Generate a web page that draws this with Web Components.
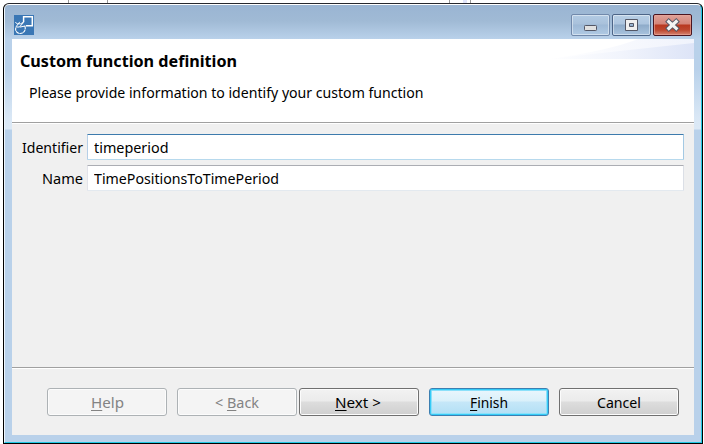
<!DOCTYPE html>
<html lang="en">
<head>
<meta charset="utf-8">
<title>Custom function definition</title>
<style>
html, body { margin: 0; width: 704px; height: 444px; overflow: hidden; background: #fff; font-family: "Noto Sans", "Open Sans", sans-serif; }
</style>
</head>
<body>
<dialog-window>
  <caption-bar slot="caption"></caption-bar>
  <wizard-header slot="body">
    <fit-text slot="title" w="217" size="15.6" bold>Custom function definition</fit-text>
    <fit-text slot="message" w="394.5">Please provide information to identify your custom function</fit-text>
  </wizard-header>
  <wizard-form slot="body">
    <form-field focused><fit-text slot="label" w="61">Identifier</fit-text><fit-text w="74.5">timeperiod</fit-text></form-field>
    <form-field><fit-text slot="label" w="41">Name</fit-text><fit-text w="185">TimePositionsToTimePeriod</fit-text></form-field>
  </wizard-form>
  <wizard-footer slot="body">
    <push-button disabled><fit-text w="33"><u>H</u>elp</fit-text></push-button>
    <push-button disabled><fit-text w="44">&lt; <u>B</u>ack</fit-text></push-button>
    <push-button joined><fit-text w="46"><u>N</u>ext &gt;</fit-text></push-button>
    <push-button primary><fit-text w="38"><u>F</u>inish</fit-text></push-button>
    <push-button><fit-text w="44">Cancel</fit-text></push-button>
  </wizard-footer>
</dialog-window>

<script>
function define(name, html, ready) {
  const template = document.createElement('template');
  template.innerHTML = html;
  customElements.define(name, class extends HTMLElement {
    connectedCallback() {
      if (this.shadowRoot) return;
      this.attachShadow({ mode: 'open' }).append(template.content.cloneNode(true));
      if (ready) ready(this);
    }
  });
}

define('dialog-window', `
<style>
:host { display: block; position: relative; box-sizing: border-box; width: 704px; height: 444px; padding: 3px 1px 0 3px;
  background:
    linear-gradient(#999,#999) 68px 0/1px 3px no-repeat,
    linear-gradient(#999,#999) 107px 0/1px 3px no-repeat,
    linear-gradient(#999,#999) 449px 0/1px 3px no-repeat,
    linear-gradient(#dfe4fa,#dfe4fa) 463px 0/4px 3px no-repeat,
    linear-gradient(#999,#999) 470px 0/1px 3px no-repeat, #fff; }
.frame { box-sizing: border-box; height: 441px; border: 1px solid #000; border-top-color: #26282e; border-radius: 6px 6px 0 0; background: #000; }
.glass { box-sizing: border-box; height: 439px; border: 1px solid; border-color: #fff #21c8e4 #21c8e4 #eef6fd; border-radius: 5px 5px 0 0;
  padding: 0 7px 7px; display: flex; flex-direction: column;
  background: linear-gradient(#9ab5d3 0, #a0bad5 16px, #b9d1ea 34px, #b9d1ea 64px, #d9e7f5 112px, #dce9f6 124px, #b9d1ea 125px); }
.client { flex: 1; display: flex; flex-direction: column; background: #f0f0f0; min-height: 0; }
</style>
<div class="frame"><div class="glass"><slot name="caption"></slot><div class="client"><slot name="body"></slot></div></div></div>`);

define('caption-bar', `
<style>
:host { display: flex; height: 34px; flex: none; justify-content: space-between; align-items: flex-start; box-sizing: border-box; padding: 9px 2px 0 2px; }
.app { margin-top: 1px; display: block; }
.buttons { display: flex; gap: 2px; }
.b { box-sizing: border-box; width: 39px; height: 22px; border: 1px solid #4d6587; border-radius: 2px; box-shadow: inset 0 0 0 1px #ffffff70;
  background: linear-gradient(#b8cfe5 0, #adc5df 9px, #8eabc9 10px, #a9c3de 100%); }
.b.min { border-color: #7189ab; background: linear-gradient(#b2cbe4 0, #a9c1db 9px, #9eb9d6 10px, #b0cae4 100%); }
.b.close { border-color: #4a1520; box-shadow: inset 0 0 0 1px #e9a699a0; background: linear-gradient(#dfa198 0, #d48478 9px, #b83820 10px, #bd472f 15px, #d58572 100%); }
.b svg { display: block; }
</style>
<svg class="app" width="20" height="20" viewBox="0 0 20 20" fill="none" stroke="#fff">
  <rect width="20" height="20" fill="#3a77b5" stroke="none"/>
  <path d="M9.600 7V1.700h8.700v9.100H12" stroke-width="1.500"/>
  <path d="M10.700 10.700c1.700 3.700-.4 7.800-4.600 7.800-3.600 0-5.500-3.300-4-6.600" stroke-width="1.100" stroke-dasharray="3.500 .5"/>
  <path d="M1.300 7.300l1.900 1.400M5.800 6.800L2 11.800M3.200 8.800h3.500l3.200-2M2.200 12h3.200l4.300-4.600M5.800 12.100l5.400-1.100" stroke-width="1"/>
</svg>
<div class="buttons">
  <div class="b min"><svg width="37" height="20"><rect x="12.500" y="10.500" width="12" height="5" rx=".8" fill="#e0e0e0" stroke="#535766"/></svg></div>
  <div class="b"><svg width="37" height="20"><path fill-rule="evenodd" d="M12.500 4.500h12v11h-12zM16.500 8.500h4v3h-4z" fill="#f0f0f0" stroke="#535766" stroke-linejoin="round"/></svg></div>
  <div class="b close"><svg width="37" height="20"><path d="M14.800 6.600l7.400 6.800M22.200 6.600l-7.400 6.800" stroke="#535766" stroke-width="5.200" stroke-linecap="square"/><path d="M14.800 6.600l7.400 6.800M22.200 6.600l-7.400 6.800" stroke="#f3f3f3" stroke-width="3.200" stroke-linecap="square"/></svg></div>
</div>`);

define('wizard-header', `
<style>
:host { display: block; position: relative; box-sizing: border-box; height: 85px; flex: none; background: #fff; border-bottom: 1px solid #fff; padding: 12px 0 0 8px; }
.rule { position: absolute; left: 0; right: 0; bottom: 0; height: 1px; background: #a0a0a0; }
.msg { padding: 11px 0 0 9px; }
.wave { position: absolute; right: 0; top: 0; }
.row { position: relative; }
</style>
<svg class="wave" width="146" height="20">
  <defs><linearGradient id="a"><stop offset="0" stop-color="#fff"/><stop offset=".5" stop-color="#f1f4fc"/><stop offset="1" stop-color="#dde4f7"/></linearGradient>
  <linearGradient id="b"><stop offset="0" stop-color="#fff"/><stop offset="1" stop-color="#f0f3fc"/></linearGradient></defs>
  <path d="M90 0H146V9L0 20Q60 12 90 0Z" fill="url(#b)"/><path d="M0 20Q80 11 146 4V20Z" fill="url(#a)"/>
</svg>
<div class="row"><slot name="title"></slot></div><div class="row msg"><slot name="message"></slot></div><div class="rule"></div>`);

define('wizard-form', `
<style>
:host { display: flex; flex: 1; flex-direction: column; gap: 5px; box-sizing: border-box; padding: 10px 10px 0 10px; }
</style><slot></slot>`);

define('form-field', `
<style>
:host { display: grid; grid-template-columns: 61px 1fr; column-gap: 4px; height: 26px; flex: none; }
.label { display: flex; justify-content: flex-end; padding-top: 3px; }
.input { box-sizing: border-box; height: 26px; background: #fff; border: 1px solid; border-color: #abadb3 #dbdfe6 #e3e9ef #e2e3ea; border-radius: 1px; padding: 2px 0 0 6px; }
:host([focused]) .input { border-color: #3d7bad #a4c9e3 #b7d9ed #b5cfe7; }
</style>
<div class="label"><slot name="label"></slot></div><div class="input"><slot></slot></div>`);

define('wizard-footer', `
<style>
:host { display: flex; height: 68px; flex: none; box-sizing: border-box; gap: 10px; padding: 20px 15px 0 35px; border-top: 1px solid #a0a0a0; box-shadow: inset 0 1px #fff; }
</style><slot></slot>`);

define('push-button', `
<style>
:host { display: flex; justify-content: center; box-sizing: border-box; width: 120px; height: 28px; border: 1px solid #707070; border-radius: 3px; padding-top: 3px;
  box-shadow: inset 0 0 0 1px #fcfcfc; background: linear-gradient(#f2f2f2 0, #ebebeb 12px, #dddddd 13px, #cfcfcf 100%); color: #000; }
:host([disabled]) { border-color: #adb2b5; background: #f4f4f4; color: #838383; }
:host([joined]) { margin-left: -8px; padding-right: 2px; }
:host([primary]) { border-color: #3c7fb1; box-shadow: inset 0 0 0 1px #35cbf7, inset 0 0 0 2px #8be0fa; background: linear-gradient(#eaf6fd 0, #daf0fa 12px, #c5e7f8 13px, #b2dff5 100%); }
</style><slot></slot>`);

/* One line of text drawn at an exact advance width. */
define('fit-text', `
<style>
:host { display: block; height: 20px; line-height: 20px; white-space: nowrap; flex: none; }
span { display: inline-block; transform-origin: 0 0; }
::slotted(u) { text-decoration-thickness: 1px; text-underline-offset: 2px; }
</style><span><slot></slot></span>`, el => {
  const width = Number(el.getAttribute('w'));
  const span = el.shadowRoot.querySelector('span');
  el.style.width = width + 'px';
  span.style.fontSize = (el.getAttribute('size') || 14.8) + 'px';
  if (el.hasAttribute('bold')) span.style.fontWeight = 700;
  span.style.transform = `scaleX(${width / span.getBoundingClientRect().width})`;
});
</script>
</body>
</html>
